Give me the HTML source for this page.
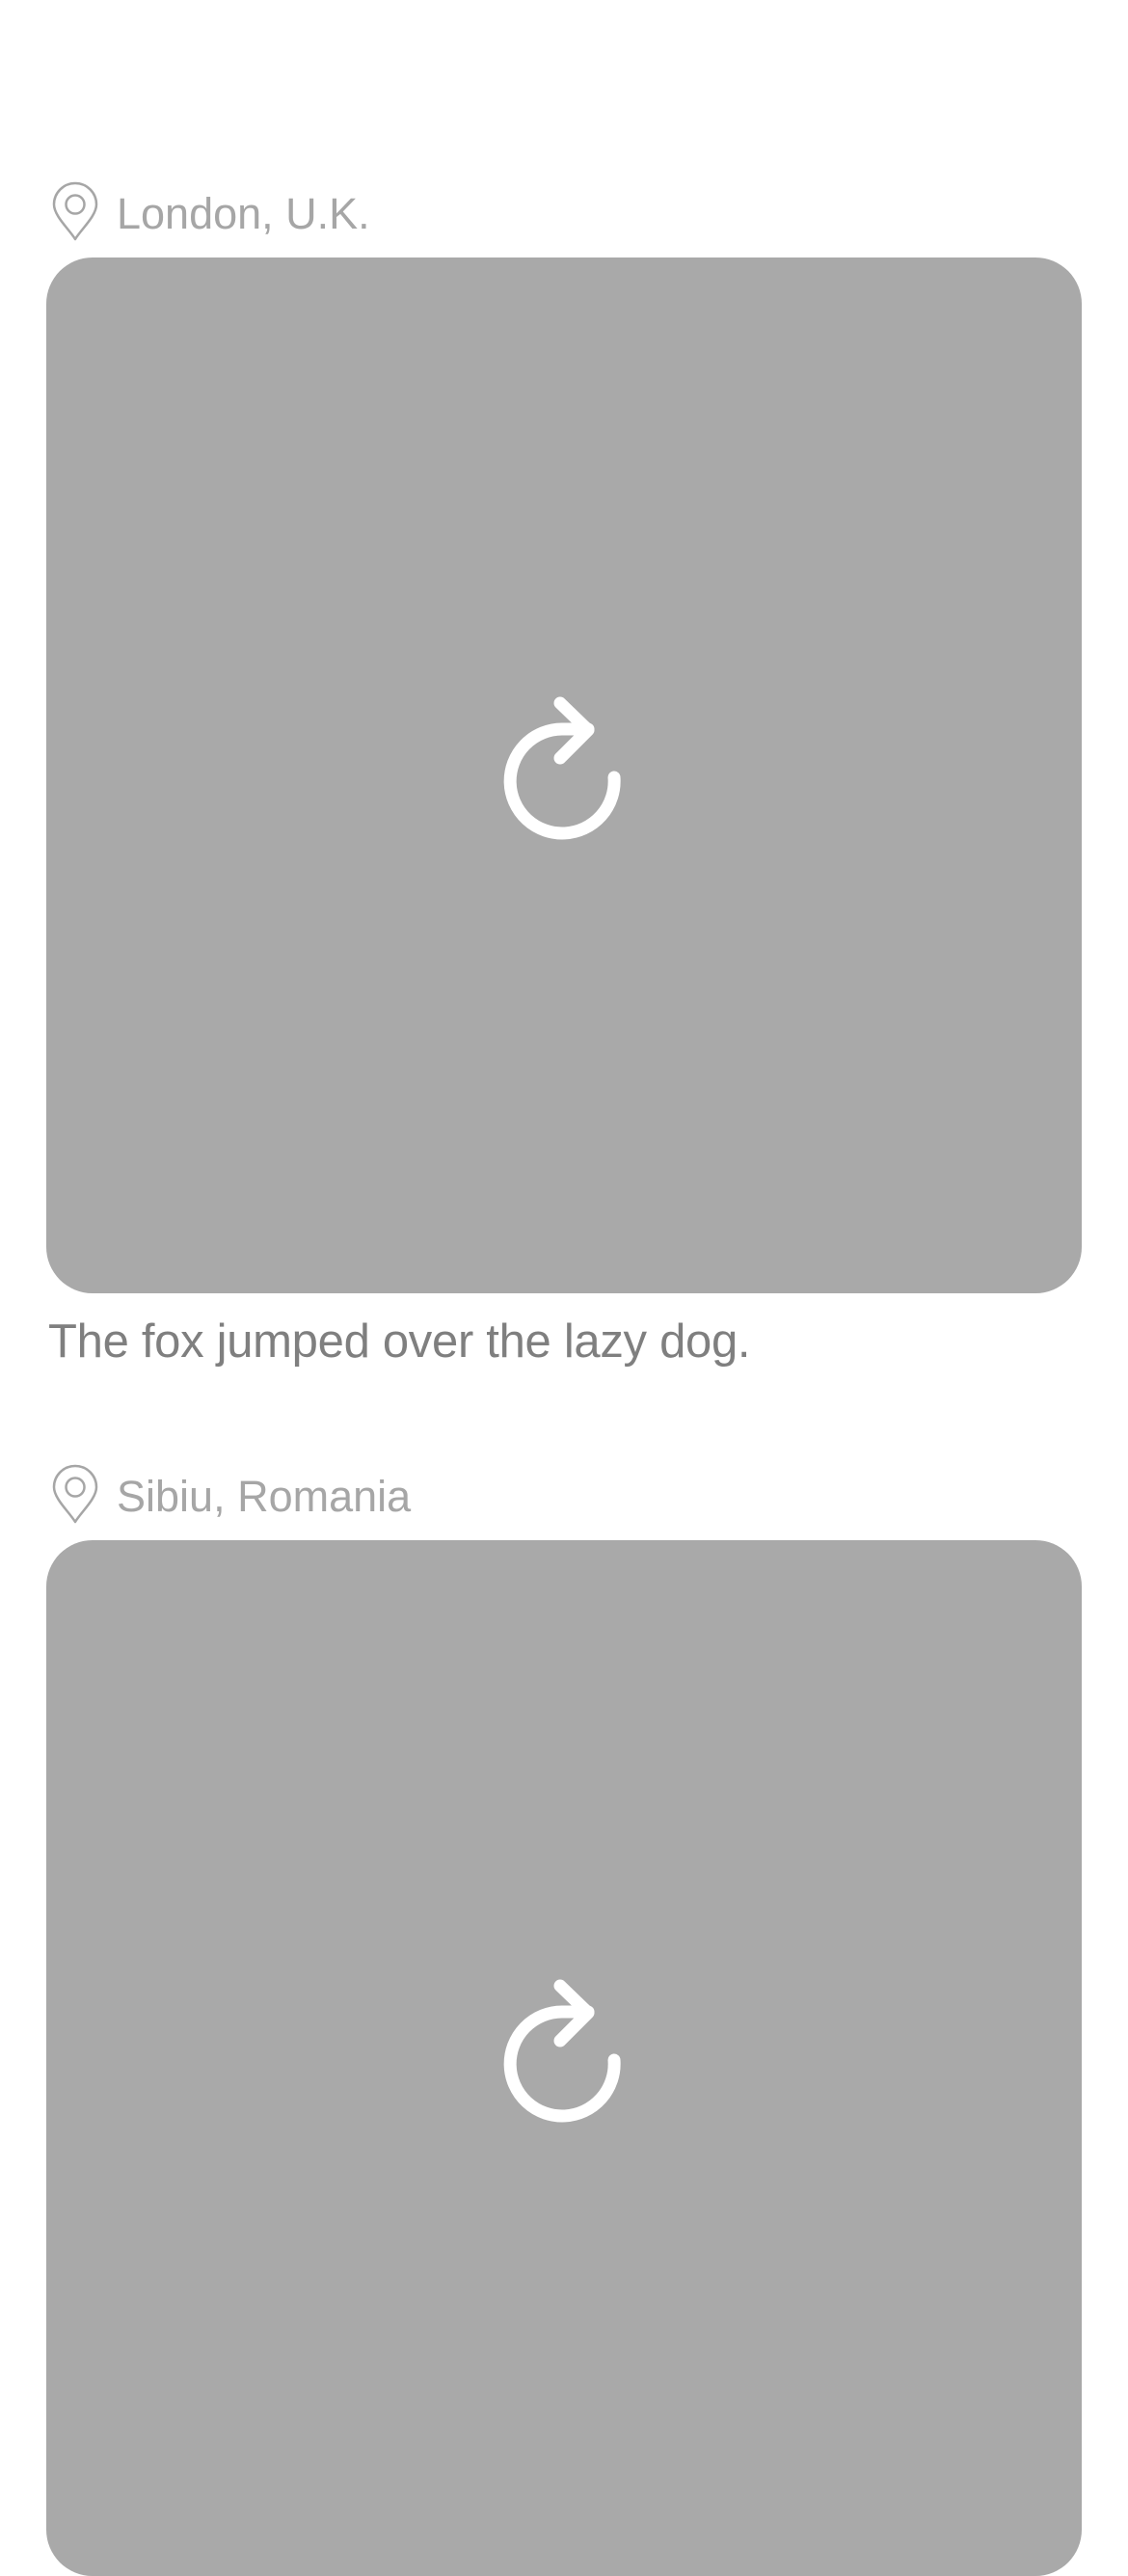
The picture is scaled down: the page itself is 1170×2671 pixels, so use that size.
<!DOCTYPE html>
<html><head><meta charset="utf-8"><style>
html,body{margin:0;padding:0;background:#fff;width:1170px;height:2532px;overflow:hidden;font-family:"Liberation Sans",sans-serif;}
.abs{position:absolute;}
.loc{position:absolute;left:121px;font-size:45px;color:#a6a6a6;line-height:1;white-space:nowrap;}
.card{position:absolute;left:48px;width:1074px;height:1074px;background:#a9a9a9;border-radius:48px;}
.cap{position:absolute;left:50px;font-size:49px;color:#7f7f7f;line-height:1;white-space:nowrap;letter-spacing:-0.3px;}
</style></head><body>
<svg class="abs" style="left:52px;top:186px" width="52" height="66" viewBox="0 0 52 66"><path d="M26 62 C20 52 4 38 4 26 A22 22 0 0 1 48 26 C48 38 32 52 26 62 Z" fill="none" stroke="#a6a6a6" stroke-width="2.5" stroke-linejoin="round"/><circle cx="26" cy="26" r="9.5" fill="none" stroke="#a6a6a6" stroke-width="2.5"/></svg>
<div class="loc" style="top:199px;">London, U.K.</div>
<div class="card" style="top:267px;"><svg class="abs" style="left:0;top:0" width="1074" height="1074"><g transform="translate(-48,-267)" fill="none" stroke="#fff" stroke-width="13" stroke-linecap="round" stroke-linejoin="round"><path d="M637 806 A54 54 0 1 1 583 756 L610 756"/><path d="M581 729 L610 757 L581 786"/></g></svg></div>
<div class="cap" style="top:1367px;">The fox jumped over the lazy dog.</div>
<svg class="abs" style="left:52px;top:1516px" width="52" height="66" viewBox="0 0 52 66"><path d="M26 62 C20 52 4 38 4 26 A22 22 0 0 1 48 26 C48 38 32 52 26 62 Z" fill="none" stroke="#a6a6a6" stroke-width="2.5" stroke-linejoin="round"/><circle cx="26" cy="26" r="9.5" fill="none" stroke="#a6a6a6" stroke-width="2.5"/></svg>
<div class="loc" style="top:1529px;">Sibiu, Romania</div>
<div class="card" style="top:1597px;"><svg class="abs" style="left:0;top:0" width="1074" height="1074"><g transform="translate(-48,-267)" fill="none" stroke="#fff" stroke-width="13" stroke-linecap="round" stroke-linejoin="round"><path d="M637 806 A54 54 0 1 1 583 756 L610 756"/><path d="M581 729 L610 757 L581 786"/></g></svg></div>
</body></html>
